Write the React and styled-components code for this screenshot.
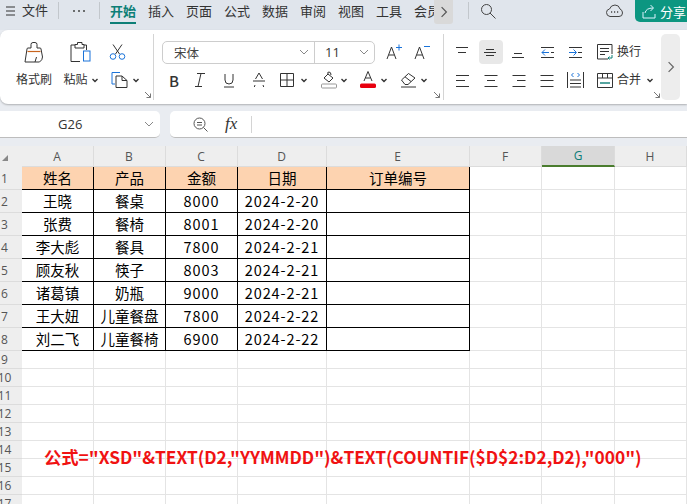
import React from 'react';
import styled, { createGlobalStyle } from 'styled-components';

const GlobalStyle = createGlobalStyle`
  html, body {
    margin: 0;
    padding: 0;
    overflow: hidden;
    background: #e8ebf0;
    font-family: "Noto Sans CJK SC", "Liberation Sans", sans-serif;
  }
`;

const Page = styled.div`
  width: 687px;
  height: 504px;
  overflow: hidden;
  display: flex;
  flex-direction: column;
  background: #e9ecf1;
`;

/* title bar */
const TitleBar = styled.header`
  height: 30px;
  flex: none;
  display: flex;
  align-items: flex-start;
  background: #e0e5ec;
  color: #333;
  font-size: 13px;
`;

const BarIcon = styled.div`
  width: ${(p) => p.$w}px;
  height: 22px;
  flex: none;
  display: flex;
  align-items: center;
  justify-content: center;
  margin-left: ${(p) => p.$ml || 0}px;
`;

const BarDivider = styled.div`
  width: 1px;
  height: 17px;
  margin-top: 2px;
  margin-left: ${(p) => p.$ml || 0}px;
  flex: none;
  background: #c2c7cc;
`;

const FileLabel = styled.span`
  width: 36px;
  margin-left: 7px;
  line-height: 20px;
  flex: none;
`;

const TabStrip = styled.nav`
  width: 324px;
  margin-left: 10px;
  flex: none;
  display: flex;
  gap: 12px;
  overflow: hidden;
`;

const Tab = styled.div`
  flex: none;
  width: 26px;
  height: 24px;
  box-sizing: border-box;
  line-height: 22px;
  white-space: nowrap;
  font-weight: ${(p) => (p.$active ? 700 : 400)};
  color: ${(p) => (p.$active ? '#0d7f77' : '#333')};
  border-bottom: 2px solid ${(p) => (p.$active ? '#0d7f77' : 'transparent')};
`;

const TabScroll = styled.div`
  width: 19px;
  height: 24px;
  flex: none;
  border-radius: 0 0 3px 3px;
  background: #d9d9d9;
  display: flex;
  align-items: center;
  justify-content: center;
`;

const ShareButton = styled.button`
  margin-left: auto;
  width: 52px;
  height: 22px;
  flex: none;
  padding: 0 0 0 7px;
  border: 0;
  border-radius: 0 0 0 5px;
  background: #0c9681;
  color: #fff;
  font: 13px "Noto Sans CJK SC", sans-serif;
  display: flex;
  align-items: center;
  gap: 3px;
  white-space: nowrap;
  overflow: hidden;
`;

/* ribbon */
const Ribbon = styled.section`
  height: 74px;
  flex: none;
  display: flex;
  background: #fff;
  border-radius: 8px 0 0 8px;
  box-shadow: 0 1px 2px rgba(0, 0, 0, 0.25);
  color: #333;
  font-size: 12px;
`;

const RibbonGroup = styled.div`
  position: relative;
  width: ${(p) => p.$w}px;
  flex: none;
  box-sizing: border-box;
  margin: 4px 0;
  padding: 4px 0 0 ${(p) => p.$pl}px;
  border-right: ${(p) => (p.$last ? 'none' : '1px solid #d4d4d4')};
`;

const Corner = styled.svg`
  position: absolute;
  right: ${(p) => p.$r || 4}px;
  bottom: 2px;
  width: 6px;
  height: 6px;
  fill: none;
  stroke: #777;
`;

const BrushGrid = styled.div`
  display: grid;
  grid-template-columns: 36px 50px 50px;
  grid-template-rows: 28px 28px;
  align-items: center;
`;

const BigTool = styled.div`
  display: flex;
  align-items: center;
  justify-content: ${(p) => (p.$left === undefined ? 'center' : 'flex-start')};
  padding-left: ${(p) => p.$left || p.$pl || 0}px;
`;

const ToolRow = styled.div`
  height: 28px;
  display: flex;
  align-items: center;
`;

const ToolLabel = styled.span`
  white-space: nowrap;
  font-size: 12px;
  padding-bottom: 3px;
  margin-left: ${(p) => p.$ml || 0}px;
`;

const Slot = styled.div`
  width: ${(p) => p.$w}px;
  height: 24px;
  flex: none;
  display: flex;
  align-items: center;
  justify-content: center;
  border-radius: 4px;
  background: ${(p) => (p.$on ? '#e8e8e8' : 'transparent')};
  margin: 0 ${(p) => p.$mr || 0}px 0 ${(p) => p.$ml || 0}px;
`;

const CaretSlot = styled.div`
  width: ${(p) => p.$w}px;
  flex: none;
  display: flex;
  margin-left: ${(p) => p.$ml || 0}px;
`;

const LetterBold = styled.span`
  font: 500 15px "Noto Sans CJK SC", sans-serif;
  color: #333;
`;

const FontBox = styled.div`
  width: 213px;
  height: 23px;
  box-sizing: border-box;
  display: flex;
  border: 1px solid #cdcdcd;
  border-radius: 5px;
`;

const FontName = styled.div`
  width: 152px;
  box-sizing: border-box;
  padding: 0 5px 0 11px;
  display: flex;
  align-items: center;
  justify-content: space-between;
  border-right: 1px solid #cdcdcd;
  font-size: 12.5px;
  color: #444;
`;

const FontSize = styled.div`
  flex: 1;
  padding: 0 5px 0 10px;
  display: flex;
  align-items: center;
  justify-content: space-between;
  font: 13px "Open Sans", sans-serif;
`;

const RibbonScroll = styled.div`
  width: 19px;
  height: 66px;
  margin: 4px 7px 0 auto;
  flex: none;
  border-radius: 5px;
  background: #ededed;
  display: flex;
  align-items: center;
  justify-content: center;
`;

/* formula row */
const FormulaRow = styled.div`
  height: 42px;
  flex: none;
  box-sizing: border-box;
  padding-top: 7px;
  display: flex;
  gap: 10px;
`;

const NameBox = styled.div`
  width: 160px;
  height: 27px;
  box-sizing: border-box;
  padding: 0 6px 0 58px;
  display: flex;
  align-items: center;
  justify-content: space-between;
  background: #fff;
  border-bottom: 1px solid #bdbdbd;
  border-radius: 0 5px 5px 0;
  font: 13px "Open Sans", sans-serif;
  color: #333;
`;

const FormulaBox = styled.div`
  flex: 1;
  height: 27px;
  box-sizing: border-box;
  padding-left: 23px;
  display: flex;
  align-items: center;
  background: #fff;
  border-bottom: 1px solid #bdbdbd;
  border-radius: 5px 0 0 5px;
`;

const FxLabel = styled.span`
  width: 20px;
  margin-left: 17px;
  font: italic 17px "Liberation Serif", serif;
  color: #333;
`;

const FxDivider = styled.div`
  width: 1px;
  height: 17px;
  margin-left: 6px;
  background: #d4d4d4;
`;

/* sheet */
const Sheet = styled.main`
  position: relative;
  flex: 1;
  display: grid;
  grid-template-columns: 22px 72px 72px 72px 89px 143px 72px 73px 72px;
  grid-template-rows: 21px repeat(8, 23px) repeat(9, 18px);
  background: #fff;
  overflow: hidden;
`;

const SheetCorner = styled.div`
  background: #eee;
  display: flex;
  align-items: flex-end;
  padding: 0 0 6px 2px;
`;

const ColHead = styled.div`
  background: ${(p) => (p.$on ? '#d9d9d9' : '#eee')};
  color: ${(p) => (p.$on ? '#0c7d78' : '#555')};
  border-right: 1px solid #dcdcdc;
  border-bottom: ${(p) => (p.$on ? '2px solid #4a7c2e' : '1px solid #dcdcdc')};
  box-sizing: border-box;
  display: flex;
  align-items: center;
  justify-content: center;
  padding-right: ${(p) => (p.$on ? 0 : 1)}px;
  font: 12px "Open Sans", sans-serif;
`;

const RowHead = styled.div`
  background: #eee;
  color: #555;
  border-bottom: 1px solid #dcdcdc;
  box-sizing: border-box;
  padding-right: 13px;
  display: flex;
  align-items: center;
  justify-content: center;
  font: 12px "Open Sans", sans-serif;
`;

const Cell = styled.div`
  box-sizing: border-box;
  padding-bottom: 2px;
  display: flex;
  align-items: center;
  justify-content: center;
  white-space: nowrap;
  color: #000;
  font: 14.5px "Noto Sans CJK SC", sans-serif;
  letter-spacing: ${(p) => (p.$num ? '0.9px' : '0')};
  background: ${(p) => (p.$head ? '#fdd3b0' : '#fff')};
  border-right: 1px solid ${(p) => (p.$table ? '#000' : '#e4e4e4')};
  border-bottom: 1px solid ${(p) => (p.$table ? '#000' : '#e4e4e4')};
`;

const FormulaNote = styled.div`
  position: absolute;
  left: 44px;
  top: 298px;
  color: #f01212;
  font-size: 17.3px;
  font-weight: 700;
  line-height: 26px;
  white-space: nowrap;
`;

/* icons */
const Ico = styled.svg`
  display: block;
  flex: none;
  fill: none;
  stroke: ${(p) => p.$stroke || '#333'};
  stroke-width: ${(p) => p.$sw || 1};
`;

const BLUE = '#1a73d9';
const TEAL = '#0d7f77';

const Chevron = ({ dir = 'down', size = 10, color = '#888' }) => (
  <Ico width={size} height={size} viewBox="0 0 10 10" $stroke={color}>
    <path d={dir === 'down' ? 'M1 3l4 4 4-4' : 'M3 1l4 4-4 4'} />
  </Ico>
);

const Caret = () => (
  <Ico width="8" height="8" viewBox="0 0 8 8" $sw={1.4}>
    <path d="M1.5 3L4 5.5L6.500 3" />
  </Ico>
);

const LinesIcon = ({ lines }) => (
  <Ico width="16" height="24" viewBox="0 0 16 24">
    {lines.map(([a, b, y]) => (
      <path key={`${a}-${y}`} d={`M${a} ${y}H${b}`} />
    ))}
  </Ico>
);

const IndentIcon = ({ flip }) => (
  <Ico width="16" height="24" viewBox="0 0 16 24">
    <path d="M2 7.5H15M2 17.5H15" />
    {flip ? (
      <>
        <path d="M2 12.5H9M6.5 9.5L9.5 12.5L6.5 15.5" stroke={BLUE} />
        <path d="M11 12.5H15" />
      </>
    ) : (
      <>
        <path d="M3 12.5H10M6 9.5L3 12.5L6 15.5" stroke={BLUE} />
        <path d="M12 12.5H15" />
      </>
    )}
  </Ico>
);

const BrushIcon = () => (
  <Ico width="20" height="21" viewBox="0 0 20 21">
    <path d="M7 6V2.5Q7 .5 9 .5H11Q13 .5 13 2.5V6" />
    <path d="M7 6H4Q3 6 3 7L1 20H15.500Q18.500 18 18.500 15L17 7Q17 6 16 6H13" />
    <path d="M3.500 9.500H16.500" stroke="#c8641e" strokeWidth="1.2" />
    <path d="M11 20L12.500 15" />
  </Ico>
);

const PasteIcon = () => (
  <Ico width="21" height="20" viewBox="0 0 21 20">
    <path d="M5 3H1V19.500H10" />
    <path d="M14 3H16.500V8" />
    <path d="M5 6V2.500H7.500V.5H12V2.500H14V6Z" />
    <rect x="13.5" y="9" width="6.500" height="10" stroke={BLUE} />
  </Ico>
);

const ScissorsIcon = () => (
  <Ico width="17" height="16" viewBox="0 0 17 16">
    <path d="M4 .5L10.5 10M13 .5L6.5 10" />
    <circle cx="4" cy="12.5" r="2.8" stroke={BLUE} />
    <circle cx="13" cy="12.5" r="2.8" stroke={BLUE} />
  </Ico>
);

const CopyIcon = () => (
  <Ico width="17" height="16" viewBox="0 0 17 16">
    <path d="M9 .5H1V12H4" stroke={BLUE} />
    <path d="M5 4H11L16 8.5V15.5H5Z" />
    <path d="M11 4V8.5H16" />
  </Ico>
);

const StrikeIcon = () => (
  <Ico width="14" height="16" viewBox="0 0 14 16">
    <path d="M3.5 7L7 1L10.5 7M1 9H13M3 13L2.3 15M11 13L11.7 15" />
  </Ico>
);

const BorderIcon = () => (
  <Ico width="14" height="14" viewBox="0 0 14 14">
    <path d="M.5 .5H13.5V13.5H.5ZM7 .5V13.5M.5 7H13.5" />
  </Ico>
);

const FillIcon = () => (
  <Ico width="16" height="18" viewBox="0 0 16 18">
    <path d="M3 7L7 3L12 7L8 11Z" />
    <path d="M7 3Q6 1 8 1Q10 1 10 4" />
    <rect x=".5" y="13" width="15" height="4" rx="1" stroke="#999" />
  </Ico>
);

const FontColorIcon = () => (
  <Ico width="16" height="18" viewBox="0 0 16 18">
    <path d="M4 10L8 .5L12 10M5.5 7H10.5" />
    <rect x="0" y="12.5" width="16" height="4.5" rx="1.5" fill="#e8000f" stroke="none" />
  </Ico>
);

const EraserIcon = () => (
  <Ico width="17" height="16" viewBox="0 0 17 16">
    <path d="M1.5 8L8.5 1.5L15 6L8 12.5H5Z" />
    <path d="M5 4.8L11 9.5" />
    <path d="M1 15H16" />
  </Ico>
);

const GrowIcon = ({ shrink }) => (
  <Ico width="17" height="16" viewBox="0 0 17 16">
    <path d="M1 15L5.5 3L10 15M2.8 11H8.2" />
    <path d={shrink ? 'M10 2.5H16' : 'M10 3.5H16M13 .5V6.5'} stroke={BLUE} />
  </Ico>
);

const WrapIcon = () => (
  <Ico width="16" height="16" viewBox="0 0 16 16">
    <path d="M11 15H.5V.5H15V10" />
    <path d="M3 4.5H12M3 7.5H12M3 10.5H8" />
    <path d="M15 11V14H11M12.5 12.5L11 14L12.5 15.5" stroke={TEAL} />
  </Ico>
);

const MergeIcon = () => (
  <Ico width="16" height="15" viewBox="0 0 16 15">
    <path d="M.5 .5H15.5V14.5H.5ZM5.5 .5V5M10.5 .5V5M.5 5H15.500" />
    <path d="M3 10H13" stroke={TEAL} strokeWidth="1.4" />
  </Ico>
);

const DistributeIcon = () => (
  <Ico width="17" height="16" viewBox="0 0 17 16">
    <path d="M.5 0V16M16.5 0V16M3 8H14M3 11.5H14M3 15H14" />
    <path d="M6.5 1L4.5 3L6.5 5M10.5 1L12.500 3L10.5 5" stroke={BLUE} />
  </Ico>
);

const CornerMark = ({ r }) => (
  <Corner $r={r} viewBox="0 0 6 6">
    <path d="M0 0L5.5 5.5M5.5 1.5V5.5H1.5" />
  </Corner>
);

const ALIGN_TOP = [
  [[1, 13, 7.5], [3, 11, 12.5]],
  [[1, 13, 12.5], [3, 11, 9.5], [3, 11, 15.5]],
  [[3, 11, 13.5], [1, 13, 17.5]],
];

const ALIGN_BOTTOM = [
  [[1, 14, 7.5], [1, 10, 12.5], [1, 14, 18.5]],
  [[1.5, 14.5, 7.5], [4, 12, 12.5], [1.5, 14.5, 18.5]],
  [[1.5, 14.5, 7.5], [6, 14.5, 12.5], [1.5, 14.5, 18.5]],
  [[1.5, 14.5, 7.5], [1.5, 14.5, 12.5], [1.5, 14.5, 18.5]],
];

const TABS = ['开始', '插入', '页面', '公式', '数据', '审阅', '视图', '工具', '会员'];
const COLS = ['A', 'B', 'C', 'D', 'E', 'F', 'G', 'H'];

const TABLE = [
  ['姓名', '产品', '金额', '日期', '订单编号'],
  ['王晓', '餐桌', '8000', '2024-2-20', ''],
  ['张费', '餐椅', '8001', '2024-2-20', ''],
  ['李大彪', '餐具', '7800', '2024-2-21', ''],
  ['顾友秋', '筷子', '8003', '2024-2-21', ''],
  ['诸葛镇', '奶瓶', '9000', '2024-2-21', ''],
  ['王大妞', '儿童餐盘', '7800', '2024-2-22', ''],
  ['刘二飞', '儿童餐椅', '6900', '2024-2-22', ''],
];

const ROW_COUNT = 17;

const SheetGrid = () => {
  const rows = [];
  for (let r = 0; r < ROW_COUNT; r++) {
    rows.push(<RowHead key={`h${r}`}>{r + 1}</RowHead>);
    COLS.forEach((c, i) => {
      const value = TABLE[r] ? TABLE[r][i] : '';
      rows.push(
        <Cell
          key={`${c}${r}`}
          $table={Boolean(TABLE[r]) && i < 5}
          $head={r === 0 && i < 5}
          $num={r > 0 && (i === 2 || i === 3)}
        >
          {value}
        </Cell>
      );
    });
  }
  return rows;
};

const App = () => (
  <Page>
    <GlobalStyle />
    <TitleBar>
      <BarIcon $w={9} $ml={6}>
        <Ico width="9" height="10" viewBox="0 0 9 10">
          <path d="M0 1H9M0 5H9M0 9H9" />
        </Ico>
      </BarIcon>
      <FileLabel>文件</FileLabel>
      <BarDivider />
      <BarIcon $w={40}>
        <Ico width="14" height="4" viewBox="0 0 14 4" $stroke="none">
          <circle cx="2" cy="2" r="1" fill="#444" />
          <circle cx="7" cy="2" r="1" fill="#444" />
          <circle cx="12" cy="2" r="1" fill="#444" />
        </Ico>
      </BarIcon>
      <BarDivider />
      <TabStrip>
        {TABS.map((t, i) => (
          <Tab key={t} $active={i === 0}>
            {t}
          </Tab>
        ))}
      </TabStrip>
      <TabScroll>
        <Chevron dir="right" size={12} color="#555" />
      </TabScroll>
      <BarDivider $ml={15} />
      <BarIcon $w={16} $ml={11}>
        <Ico width="16" height="16" viewBox="0 0 16 16" $stroke="#444">
          <circle cx="6.5" cy="6.5" r="5" />
          <path d="M10 10L15.5 15.5" />
        </Ico>
      </BarIcon>
      <BarIcon $w={18} $ml={109}>
        <Ico width="17" height="14" viewBox="0 0 17 14" $stroke="#444">
          <path d="M4 12.5Q.5 12 .5 8.5Q.5 5.5 3.5 5Q5 1 9 1Q13 1 14 5Q16.5 6 16.5 9Q16.5 12.5 13 12.5Z" />
          <path d="M5 8H6.2M8 8H9.2M11 8H12.2" strokeWidth="1.4" />
        </Ico>
      </BarIcon>
      <ShareButton>
        <Ico width="15" height="15" viewBox="0 0 15 15" $stroke="#dff3ff">
          <path d="M1 8V14H13V10M3 9Q4 4 11 4M8.5 1L11.5 4L8.5 7" />
        </Ico>
        分享
      </ShareButton>
    </TitleBar>

    <Ribbon>
      <RibbonGroup $w={154} $pl={16}>
        <BrushGrid>
          <BigTool><BrushIcon /></BigTool>
          <BigTool $pl={6}><PasteIcon /></BigTool>
          <BigTool $left={7}><ScissorsIcon /></BigTool>
          <ToolLabel>格式刷</ToolLabel>
          <BigTool $pl={4}>
            <ToolLabel $ml={4}>粘贴</ToolLabel>
            <CaretSlot $w={8} $ml={3}><Caret /></CaretSlot>
          </BigTool>
          <BigTool $left={9}>
            <CopyIcon />
            <CaretSlot $w={8} $ml={4}><Caret /></CaretSlot>
          </BigTool>
        </BrushGrid>
        <CornerMark r={2} />
      </RibbonGroup>

      <RibbonGroup $w={290} $pl={8}>
        <ToolRow>
          <FontBox>
            <FontName>宋体<Chevron /></FontName>
            <FontSize>11<Chevron /></FontSize>
          </FontBox>
          <Slot $w={28} $ml={5}><GrowIcon /></Slot>
          <Slot $w={28}><GrowIcon shrink /></Slot>
        </ToolRow>
        <ToolRow>
          <Slot $w={24}><LetterBold>B</LetterBold></Slot>
          <Slot $w={28}>
            <Ico width="12" height="14" viewBox="0 0 12 14"><path d="M3 .5H11M7 .5L4 13.5M1 13.5H8" /></Ico>
          </Slot>
          <Slot $w={30}>
            <Ico width="12" height="15" viewBox="0 0 12 15"><path d="M2 1V7Q2 11 6 11Q10 11 10 7V1M1 14H11" /></Ico>
          </Slot>
          <Slot $w={30}><StrikeIcon /></Slot>
          <Slot $w={26}><BorderIcon /></Slot>
          <CaretSlot $w={17}><Caret /></CaretSlot>
          <Slot $w={23}><FillIcon /></Slot>
          <CaretSlot $w={16}><Caret /></CaretSlot>
          <Slot $w={24}><FontColorIcon /></Slot>
          <CaretSlot $w={16}><Caret /></CaretSlot>
          <Slot $w={24}><EraserIcon /></Slot>
          <CaretSlot $w={8}><Caret /></CaretSlot>
        </ToolRow>
        <CornerMark r={3} />
      </RibbonGroup>

      <RibbonGroup $w={217} $pl={7} $last>
        <ToolRow>
          {ALIGN_TOP.map((lines, i) => (
            <Slot key={i} $w={24} $mr={4} $on={i === 1}><LinesIcon lines={lines} /></Slot>
          ))}
          <Slot $w={24} $mr={4}><IndentIcon /></Slot>
          <Slot $w={24}><IndentIcon flip /></Slot>
          <Slot $w={16} $ml={10}><WrapIcon /></Slot>
          <ToolLabel $ml={4}>换行</ToolLabel>
        </ToolRow>
        <ToolRow>
          {ALIGN_BOTTOM.map((lines, i) => (
            <Slot key={i} $w={24} $mr={4}><LinesIcon lines={lines} /></Slot>
          ))}
          <Slot $w={24}><DistributeIcon /></Slot>
          <Slot $w={16} $ml={10}><MergeIcon /></Slot>
          <ToolLabel $ml={4}>合并</ToolLabel>
          <CaretSlot $w={8} $ml={5}><Caret /></CaretSlot>
        </ToolRow>
        <CornerMark r={1} />
      </RibbonGroup>

      <RibbonScroll>
        <Chevron dir="right" size={12} color="#666" />
      </RibbonScroll>
    </Ribbon>

    <FormulaRow>
      <NameBox>G26<Chevron /></NameBox>
      <FormulaBox>
        <Ico width="15" height="15" viewBox="0 0 15 15" $stroke="#555">
          <circle cx="6.5" cy="6.5" r="5.5" />
          <path d="M10.5 10.5L14.5 14.5M4 5.5H9M4 8H9" />
        </Ico>
        <FxLabel>fx</FxLabel>
        <FxDivider />
      </FormulaBox>
    </FormulaRow>

    <Sheet>
      <SheetCorner>
        <Ico width="6" height="6" viewBox="0 0 6 6" $stroke="none">
          <path d="M6 0V6H0Z" fill="#888" />
        </Ico>
      </SheetCorner>
      {COLS.map((c) => (
        <ColHead key={c} $on={c === 'G'}>{c}</ColHead>
      ))}
      <SheetGrid />
      <FormulaNote>公式="XSD"&amp;TEXT(D2,"YYMMDD")&amp;TEXT(COUNTIF($D$2:D2,D2),"000")</FormulaNote>
    </Sheet>
  </Page>
);

export default App;
